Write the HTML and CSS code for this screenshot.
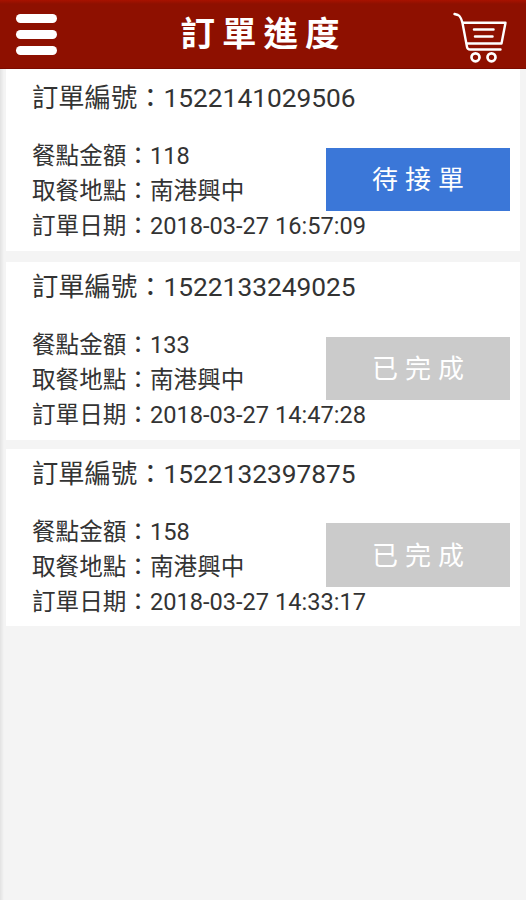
FILE: index.html
```
<!DOCTYPE html>
<html lang="zh-Hant">
<head>
  <meta charset="UTF-8" />
  <meta name="viewport" content="width=device-width, initial-scale=1.0" />
  <title>訂單進度</title>
  <link rel="stylesheet" href="styles.css">
</head>
<body>
  <header class="topbar">
    <button class="menu-btn" aria-label="選單">
      <span></span>
      <span></span>
      <span></span>
    </button>
    <h1>訂單進度</h1>
    <a href="#" class="cart" aria-label="購物車">
      <svg width="56" height="52" viewBox="0 0 56 52" fill="none" stroke="#fff" stroke-linecap="round" stroke-linejoin="round">
        <path d="M1.500 3 L5 4 C7.500 5 8.500 8 9.500 12 L14 36 Q14.500 38.500 17 38.500 H47.500" stroke-width="2.400" />
        <path d="M10 11.800 H52.500 L48.500 32.500 H14" stroke-width="2.400" />
        <path d="M21 18.500 H40.500 M22 25.500 H39.500" stroke-width="2.500" />
        <circle cx="22.500" cy="46.300" r="4" stroke-width="2.700" />
        <circle cx="38.500" cy="46.300" r="4" stroke-width="2.700" />
      </svg>
    </a>
  </header>

  <main class="orders">
    <section class="order">
      <h2>訂單編號：1522141029506</h2>
      <p>餐點金額：118</p>
      <p>取餐地點：南港興中</p>
      <p class="date">訂單日期：2018-03-27 16:57:09</p>
      <button class="status waiting">待接單</button>
    </section>

    <section class="order">
      <h2>訂單編號：1522133249025</h2>
      <p>餐點金額：133</p>
      <p>取餐地點：南港興中</p>
      <p class="date">訂單日期：2018-03-27 14:47:28</p>
      <button class="status">已完成</button>
    </section>

    <section class="order">
      <h2>訂單編號：1522132397875</h2>
      <p>餐點金額：158</p>
      <p>取餐地點：南港興中</p>
      <p class="date">訂單日期：2018-03-27 14:33:17</p>
      <button class="status">已完成</button>
    </section>
  </main>
</body>
</html>
```
FILE: styles.css
```
* {
  margin: 0;
  padding: 0;
  box-sizing: border-box;
}

body {
  min-height: 100vh;
  font-family: Roboto, "Noto Sans CJK TC", sans-serif;
  color: #333;
  background: linear-gradient(to right, #e2e2e2, #f4f4f4 4px);
}

.topbar {
  display: flex;
  align-items: center;
  justify-content: space-between;
  height: 69px;
  padding: 0 17px 0 16px;
  color: #fff;
  background: linear-gradient(#a81200, #8e1000 4px);
  border-bottom: 1px solid #7c0b00;
}

.topbar h1 {
  font-size: 34.5px;
  font-weight: bold;
  line-height: 68px;
  letter-spacing: 7px;
}

.menu-btn {
  display: flex;
  flex-direction: column;
  gap: 7px;
  width: 41px;
  margin-right: 17px;
  background: none;
  border: none;
}

.menu-btn span {
  height: 9px;
  border-radius: 5px;
  background: #fff;
}

.cart svg {
  display: block;
  margin-top: 5px;
}

.orders {
  display: flex;
  flex-direction: column;
  gap: 10px;
  padding: 0 6px;
}

.order {
  display: grid;
  grid-template-columns: 1fr 184px;
  grid-template-rows: 66px 35px 35px 35px;
  height: 178px;
  padding: 0 10px 0 26px;
  background: #fff;
}

.order:first-child {
  height: 182px;
  padding-top: 4px;
  margin-bottom: 1px;
}

.order:last-child {
  height: 177px;
  margin-top: -1px;
}

.order h2 {
  grid-column: 1 / 3;
  font-size: 26.3px;
  font-weight: normal;
  line-height: 50px;
}

.order p {
  grid-column: 1;
  font-size: 23.6px;
  line-height: 35px;
  white-space: nowrap;
}

.order .date {
  grid-column: 1 / 3;
}

.status {
  grid-column: 2;
  grid-row: 2 / 4;
  align-self: end;
  height: 63px;
  margin-bottom: -2px;
  padding: 0 0 4px 7px;
  font-family: inherit;
  font-size: 26px;
  letter-spacing: 7px;
  color: #fff;
  background: #cbcbcb;
  border: none;
}

.order:last-child .status {
  height: 64px;
}

.waiting {
  background: #3b77d8;
}
```
